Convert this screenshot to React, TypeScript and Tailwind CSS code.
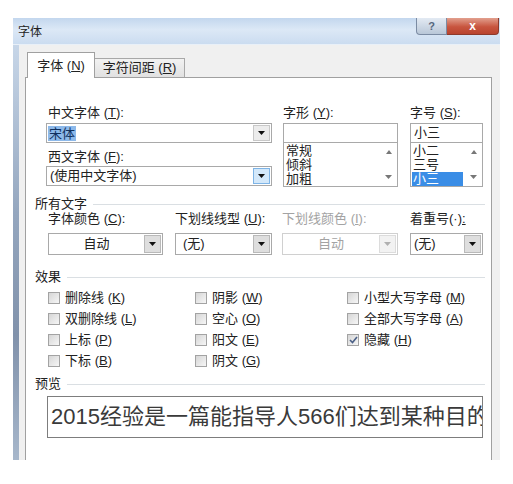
import React from 'react';

const Down = ({ color = '#111' }: { color?: string }) => (
  <svg width="7" height="4" viewBox="0 0 7 4">
    <path d="M0 0h7L3.5 4z" fill={color} />
  </svg>
);

const Up = ({ color = '#777' }: { color?: string }) => (
  <svg width="6" height="4" viewBox="0 0 6 4">
    <path d="M0 4h6L3 0z" fill={color} />
  </svg>
);

const Key = ({ k }: { k: string }) => (
  <>
    {' '}(<span className="underline">{k}</span>)
  </>
);

const Check = ({ label, k, checked }: { label: string; k: string; checked?: boolean }) => (
  <div className="flex h-[21px] items-center gap-[5px]">
    <span className="flex h-[12px] w-[12px] items-center justify-center border border-[#a3a3a3] bg-[linear-gradient(135deg,#d6d6d6,#f6f6f6)]">
      {checked && (
        <svg width="9" height="8" viewBox="0 0 9 8">
          <path d="M1 4l2.5 2.5L8 1" fill="none" stroke="#4a5f86" strokeWidth="1.6" />
        </svg>
      )}
    </span>
    <span>
      {label}
      <Key k={k} />
    </span>
  </div>
);

const Group = ({ title, className }: { title: string; className: string }) => (
  <div className={`flex h-[12px] items-center ${className}`}>
    <span>{title}</span>
    <div className="ml-[6px] h-px flex-1 bg-[#dadfe3]" />
  </div>
);

const App = () => {
  return (
    <div className="h-[484px] w-[513px] bg-white pl-[13px] pt-[18px] font-['Liberation_Sans','Noto_Sans_CJK_SC',sans-serif] text-[13px] leading-[16px] text-[#222]">
      <div className="flex h-[442px] w-[487px] flex-col">
        {/* title bar */}
        <div className="flex h-[27px] justify-between border-b border-[#e9f0f8] bg-[linear-gradient(180deg,#c3d7ee,#dce8f6_45%,#cbdcf0)]">
          <span className="pl-[5px] pt-[6px] text-[12px]">字体</span>
          <div className="mr-px flex h-[17px]">
            <div className="flex w-[31px] items-center justify-center rounded-bl-[4px] border border-t-0 border-[#7b8ba3] bg-[linear-gradient(180deg,#e3eaf3,#b9c7d8)] text-[11px] font-bold text-[#56667e]">
              ?
            </div>
            <div className="flex w-[52px] items-center justify-center rounded-br-[4px] border border-l-0 border-t-0 border-[#8d3a2c] bg-[linear-gradient(180deg,#e2a08e,#c8553f_55%,#b9442f)] text-[12px] font-bold text-white">
              x
            </div>
          </div>
        </div>

        <div className="flex flex-1 bg-[#f0f0f0]">
          <div className="w-[6px] bg-[linear-gradient(180deg,#c7d6e8,#95a7bf_40%,#8192ab_70%,#a7b7cb)]" />
          <div className="flex flex-1 flex-col pl-[6px] pr-[8px] pt-[7px]">
            {/* tabs */}
            <div className="relative z-10 flex items-end pl-[2px]">
              <div className="-mb-px flex h-[26px] w-[68px] items-center justify-center border border-b-0 border-[#a0a0a0] bg-white">
                字体
                <Key k="N" />
              </div>
              <div className="flex h-[19px] w-[90px] items-center justify-center border border-b-0 border-l-0 border-[#a8a8a8] bg-[linear-gradient(180deg,#f2f2f2,#e1e1e1)]">
                字符间距
                <Key k="R" />
              </div>
            </div>

            {/* panel */}
            <div className="flex flex-1 flex-col border border-b-0 border-[#a0a0a0] bg-white pl-[9px] pr-[6px] pt-[27px]">
              {/* fonts */}
              <div className="ml-[11px] flex">
                <div className="flex w-[226px] flex-col">
                  <span className="pl-[2px]">
                    中文字体
                    <Key k="T" />:
                  </span>
                  <div className="mt-[2px] flex h-[20px] border border-[#a9a9a9] bg-white">
                    <div className="flex flex-1 items-center pl-px">
                      <span className="bg-[#8db9ea] px-px leading-[15px] text-[#10305e]">宋体</span>
                    </div>
                    <div className="my-px mr-px flex w-[17px] items-center justify-center border border-[#c8c8c8] bg-[#ececec]">
                      <Down />
                    </div>
                  </div>
                  <span className="mt-[6px] pl-[2px]">
                    西文字体
                    <Key k="F" />:
                  </span>
                  <div className="mt-px flex h-[20px] border border-[#a9a9a9] bg-white">
                    <div className="flex flex-1 items-center pl-[3px]">(使用中文字体)</div>
                    <div className="my-px mr-px flex w-[17px] items-center justify-center border border-[#7eb4e6] bg-[#d3e8fa]">
                      <Down />
                    </div>
                  </div>
                </div>

                <div className="ml-[11px] flex w-[115px] flex-col">
                  <span>
                    字形
                    <Key k="Y" />:
                  </span>
                  <div className="mt-[2px] h-[20px] border border-[#a9a9a9] bg-white" />
                  <div className="-mt-px flex h-[45px] border border-[#a9a9a9] bg-white">
                    <div className="flex-1 pl-[2px] pt-px leading-[14px]">
                      <div>常规</div>
                      <div>倾斜</div>
                      <div>加粗</div>
                    </div>
                    <div className="flex w-[17px] flex-col items-center justify-between py-[7px]">
                      <Up />
                      <Down color="#777" />
                    </div>
                  </div>
                </div>

                <div className="ml-[12px] flex w-[73px] flex-col">
                  <span>
                    字号
                    <Key k="S" />:
                  </span>
                  <div className="mt-[2px] flex h-[20px] items-center border border-[#a9a9a9] bg-white pl-[3px]">
                    小三
                  </div>
                  <div className="-mt-px flex h-[45px] border border-[#a9a9a9] bg-white">
                    <div className="flex-1 pl-px pt-px leading-[14px]">
                      <div className="pl-px">小二</div>
                      <div className="pl-px">三号</div>
                      <div className="mr-[2px] bg-[#3a8de6] pl-px text-white">小三</div>
                    </div>
                    <div className="flex w-[17px] flex-col items-center justify-between py-[7px]">
                      <Up />
                      <Down color="#777" />
                    </div>
                  </div>
                </div>
              </div>

              {/* all text */}
              <Group title="所有文字" className="mt-[11px]" />
              <div className="ml-[13px] mt-px flex">
                <div className="flex w-[115px] flex-col">
                  <span>
                    字体颜色
                    <Key k="C" />:
                  </span>
                  <div className="mt-[6px] flex h-[22px] border border-[#a9a9a9] bg-white">
                    <div className="flex flex-1 items-center justify-center">自动</div>
                    <div className="my-px mr-px flex w-[17px] items-center justify-center border border-[#b9b9b9] bg-[#dedede]">
                      <Down />
                    </div>
                  </div>
                </div>
                <div className="ml-[12px] flex w-[97px] flex-col">
                  <span className="whitespace-nowrap">
                    下划线线型
                    <Key k="U" />:
                  </span>
                  <div className="mt-[6px] flex h-[22px] border border-[#a9a9a9] bg-white">
                    <div className="flex flex-1 items-center pl-[7px]">(无)</div>
                    <div className="my-px mr-px flex w-[17px] items-center justify-center border border-[#b9b9b9] bg-[#dedede]">
                      <Down />
                    </div>
                  </div>
                </div>
                <div className="ml-[10px] flex w-[116px] flex-col text-[#a3a3a3]">
                  <span className="whitespace-nowrap">
                    下划线颜色
                    <Key k="I" />:
                  </span>
                  <div className="mt-[6px] flex h-[22px] border border-[#d0d0d0] bg-white">
                    <div className="flex flex-1 items-center justify-center">自动</div>
                    <div className="my-px mr-px flex w-[17px] items-center justify-center border border-[#dcdcdc] bg-[#f2f2f2]">
                      <Down color="#b0b0b0" />
                    </div>
                  </div>
                </div>
                <div className="ml-[12px] flex w-[73px] flex-col">
                  <span className="whitespace-nowrap">
                    着重号(·)<span className="underline">:</span>
                  </span>
                  <div className="mt-[6px] flex h-[22px] border border-[#a9a9a9] bg-white">
                    <div className="flex flex-1 items-center pl-[3px]">(无)</div>
                    <div className="my-px mr-px flex w-[17px] items-center justify-center border border-[#b9b9b9] bg-[#dedede]">
                      <Down />
                    </div>
                  </div>
                </div>
              </div>

              {/* effects */}
              <Group title="效果" className="mt-[16px]" />
              <div className="ml-[13px] mt-[4px] grid grid-cols-[147px_152px_1fr]">
                <div className="flex flex-col">
                  <Check label="删除线" k="K" />
                  <Check label="双删除线" k="L" />
                  <Check label="上标" k="P" />
                  <Check label="下标" k="B" />
                </div>
                <div className="flex flex-col">
                  <Check label="阴影" k="W" />
                  <Check label="空心" k="O" />
                  <Check label="阳文" k="E" />
                  <Check label="阴文" k="G" />
                </div>
                <div className="flex flex-col">
                  <Check label="小型大写字母" k="M" />
                  <Check label="全部大写字母" k="A" />
                  <Check label="隐藏" k="H" checked />
                </div>
              </div>

              {/* preview */}
              <Group title="预览" className="mt-[7px]" />
              <div className="ml-[12px] mt-[6px] flex h-[42px] w-[436px] items-center overflow-hidden whitespace-nowrap border border-[#7d7d7d] bg-white pl-[3px] text-[22px] leading-[26px] text-[#3a3a3a]">
                2015经验是一篇能指导人566们达到某种目的
              </div>
            </div>
          </div>
        </div>
      </div>
    </div>
  );
};

export default App;
